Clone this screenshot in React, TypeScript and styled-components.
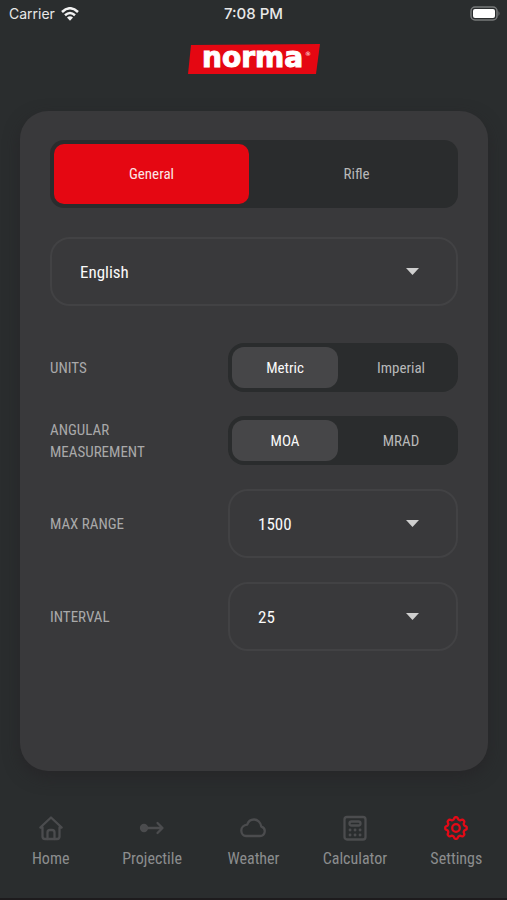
import React, { useState } from "react";
import styled, { createGlobalStyle } from "styled-components";

const GlobalStyle = createGlobalStyle`
  *, *::before, *::after { box-sizing: border-box; }
  body {
    margin: 0;
    background: #2a2d2e;
    color: #ececec;
    font-family: "Roboto Condensed", "Liberation Sans Narrow", "Liberation Sans", sans-serif;
  }
  button, select, input { font: inherit; color: inherit; }
`;

const Page = styled.div`
  display: flex;
  flex-direction: column;
  min-height: 100vh;
  border-bottom: 2px solid #1d1b1d;
`;

const StatusBar = styled.div`
  display: grid;
  grid-template-columns: 1fr auto 1fr;
  align-items: center;
  height: 27px;
  padding: 0 6px;
  font-family: Inter, sans-serif;
  font-size: 14px;
  color: #e8e8e8;
`;

const Carrier = styled.div`
  display: flex;
  align-items: center;
  gap: 6px;
  padding-left: 3px;
`;

const Clock = styled.time`
  font-size: 15px;
  font-weight: 500;
`;

const Battery = styled.svg`
  justify-self: end;
`;

const Header = styled.header`
  display: flex;
  justify-content: center;
  padding: 12px 0 32px;
`;

const Logo = styled.svg`
  display: block;
`;

const Card = styled.main`
  flex: 1;
  display: flex;
  flex-direction: column;
  margin: 0 19px 0 20px;
  padding: 29px 30px;
  border-radius: 28px;
  background: #39393b;
  box-shadow: 0 6px 16px rgba(36, 34, 36, 0.6);
`;

const Segments = styled.div<{ $large?: boolean }>`
  display: grid;
  grid-template-columns: 1fr 1fr;
  gap: 10px;
  height: ${(p) => (p.$large ? 68 : 49)}px;
  padding: 4px;
  border-radius: ${(p) => (p.$large ? 14 : 16)}px;
  background: #2a2c2d;
`;

const Tab = styled.button<{ $active: boolean }>`
  border: 0;
  border-radius: 10px;
  background: ${(p) => (p.$active ? "#e50712" : "transparent")};
  color: ${(p) => (p.$active ? "#fbe6e6" : "#b8b9b9")};
  font-size: 15px;
  cursor: pointer;
`;

const Option = styled.label`
  display: flex;
  align-items: center;
  justify-content: center;
  border-radius: 12px;
  color: #b8b9b9;
  font-size: 15px;
  cursor: pointer;

  &:has(input:checked) {
    background: #464648;
    color: #fafafa;
  }
`;

const Radio = styled.input`
  appearance: none;
  width: 0;
  height: 0;
  margin: 0;
`;

const SelectBox = styled.div`
  display: grid;
  align-items: center;
  height: 69px;

  & > * { grid-area: 1 / 1; }
`;

const Select = styled.select`
  appearance: none;
  width: 100%;
  height: 100%;
  padding: 0 60px 0 28px;
  border: 2px solid #424244;
  border-radius: 20px;
  background: transparent;
  color: #fafafa;
  font-size: 17px;
`;

const Arrow = styled.svg`
  justify-self: end;
  margin-right: 39px;
  pointer-events: none;
`;

const Language = styled.div`
  margin: 29px 0 37px;
`;

const Rows = styled.div`
  display: grid;
  gap: 24px;
`;

const Row = styled.div`
  display: grid;
  grid-template-columns: 178fr 230fr;
  align-items: center;
`;

const RowLabel = styled.label`
  padding-right: 60px;
  color: #a9a9aa;
  font-size: 15px;
  line-height: 22px;
  text-transform: uppercase;
`;

const Nav = styled.nav`
  display: grid;
  grid-template-columns: repeat(5, 1fr);
  padding: 44px 0 28px;
`;

const NavLink = styled.a<{ $active?: boolean }>`
  display: flex;
  flex-direction: column;
  align-items: center;
  gap: 7px;
  color: #8c8d8e;
  font-size: 16px;
  line-height: 22px;
  text-decoration: none;

  svg { color: ${(p) => (p.$active ? "#e30a17" : "#4b4c4e")}; }
`;

const NavIcon = ({ children }: { children: React.ReactNode }) => (
  <svg width="26" height="26" viewBox="0 0 26 26" fill="none" stroke="currentColor" strokeWidth="2.3" strokeLinecap="round" strokeLinejoin="round" aria-hidden="true">
    {children}
  </svg>
);

const gearPath = () => {
  const points: string[] = [];
  for (let i = 0; i <= 96; i++) {
    const a = (i / 96) * Math.PI * 2;
    const r = 9.7 + 1.2 * Math.tanh(1.6 * Math.cos(8 * a));
    points.push(`${(13 + r * Math.sin(a)).toFixed(2)} ${(13 - r * Math.cos(a)).toFixed(2)}`);
  }
  return `M${points.join("L")}Z`;
};

const navItems = [
  { name: "Home", icon: <><path d="M4.500 12.500H2.300L13 2.500l10.700 10H21.500V21.500q0 2.500-2.500 2.500H7q-2.500 0-2.500-2.500Z" /><path d="M9.500 24v-6.500q0-2.500 2.500-2.500h2q2.500 0 2.500 2.500V24" /></> },
  { name: "Projectile", icon: <><circle cx="5" cy="13" r="3" fill="currentColor" /><path d="M8 13h15M18.500 8l5 5-5 5" /></> },
  { name: "Weather", icon: <path d="M6 21h14a4.800 4.800 0 0 0 1.300-9.400C20.800 7.500 17.500 4.500 14 4.500c-3.400 0-5.900 2-6.800 5.200C3.800 10 1.300 12.500 1.300 15.600 1.300 18.800 3.500 21 6 21Z" /> },
  { name: "Calculator", icon: <><rect x="2.500" y="2" width="21" height="22.500" rx="2.500" /><rect x="7.500" y="6.500" width="11" height="4" rx="2" /><path d="M8 15h.1M13 15h.1M18 15h.1M8 20h.1M13 20h.1M18 20h.1" strokeWidth="2.800" /></> },
  { name: "Settings", icon: <><path d={gearPath()} /><circle cx="13" cy="13" r="3.800" /></> },
];

function DropDown({ id, label, options }: { id: string; label?: string; options: string[] }) {
  return (
    <SelectBox>
      <Select id={id} aria-label={label}>
        {options.map((o) => <option key={o}>{o}</option>)}
      </Select>
      <Arrow width="13" height="7" viewBox="0 0 13 7" aria-hidden="true">
        <path d="M0 0h13L6.500 7Z" fill="#cfcfcf" />
      </Arrow>
    </SelectBox>
  );
}

function Choice({ name, options }: { name: string; options: string[] }) {
  return (
    <Segments role="radiogroup" aria-labelledby={`${name}-label`}>
      {options.map((o, i) => (
        <Option key={o}>
          <Radio type="radio" name={name} defaultChecked={i === 0} />
          {o}
        </Option>
      ))}
    </Segments>
  );
}

export default function App() {
  const [tab, setTab] = useState("General");
  return (
    <Page>
      <GlobalStyle />
      <StatusBar>
        <Carrier>
          Carrier
          <svg width="18" height="14" viewBox="0 0 18 14" fill="none" stroke="#f2f2f2" strokeWidth="2.500" aria-hidden="true">
            <path d="M1 5q8-7.500 16 0M4 8.300q5-4.500 10 0" />
            <path d="M6 10.500q3-2.500 6 0L9 13.800Z" fill="#f2f2f2" stroke="none" />
          </svg>
        </Carrier>
        <Clock>7:08 PM</Clock>
        <Battery width="31" height="15" viewBox="0 0 31 15" aria-hidden="true">
          <rect x="1" y="1" width="26" height="13" rx="4" fill="none" stroke="#77797a" strokeWidth="1.500" />
          <rect x="3" y="3" width="22" height="9" rx="2" fill="#fff" />
          <path d="M28.500 5q2 2.500 0 5Z" fill="#77797a" />
        </Battery>
      </StatusBar>
      <Header>
        <Logo width="132" height="40" viewBox="0 0 132 40" role="img" aria-label="norma">
          <path d="M3 6 132 5l-4 30H0Z" fill="#e50712" />
          <text x="14" y="28" fill="#fff" stroke="#fff" strokeWidth="1" fontFamily="DejaVu Sans" fontWeight="700" fontSize="28">norma</text>
          <text x="117" y="17" fill="#fff" fontFamily="DejaVu Sans" fontSize="6">®</text>
        </Logo>
      </Header>
      <Card>
        <Segments $large role="tablist">
          {["General", "Rifle"].map((t) => (
            <Tab key={t} type="button" role="tab" aria-selected={tab === t} $active={tab === t} onClick={() => setTab(t)}>{t}</Tab>
          ))}
        </Segments>
        <Language><DropDown id="language" label="Language" options={["English"]} /></Language>
        <Rows>
          <Row><RowLabel as="span" id="units-label">Units</RowLabel><Choice name="units" options={["Metric", "Imperial"]} /></Row>
          <Row><RowLabel as="span" id="angular-label">Angular measurement</RowLabel><Choice name="angular" options={["MOA", "MRAD"]} /></Row>
          <Row><RowLabel htmlFor="range">Max range</RowLabel><DropDown id="range" options={["1500"]} /></Row>
          <Row><RowLabel htmlFor="interval">Interval</RowLabel><DropDown id="interval" options={["25"]} /></Row>
        </Rows>
      </Card>
      <Nav aria-label="Main">
        {navItems.map((n) => (
          <NavLink key={n.name} href={`#${n.name.toLowerCase()}`} $active={n.name === "Settings"}>
            <NavIcon>{n.icon}</NavIcon>
            {n.name}
          </NavLink>
        ))}
      </Nav>
    </Page>
  );
}
